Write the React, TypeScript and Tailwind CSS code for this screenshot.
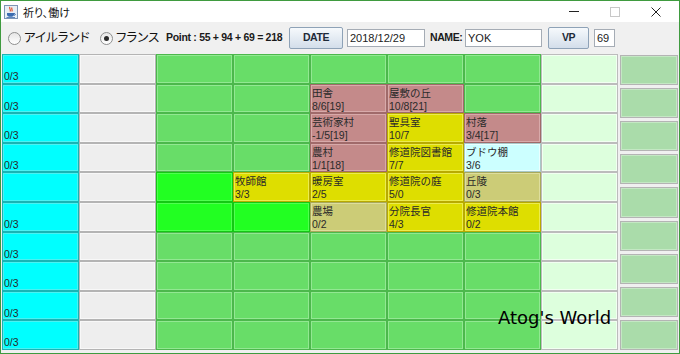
import React from "react";

type Kind = "c" | "g" | "G" | "B" | "Y" | "P" | "K" | "L" | "W";

type Cell = { k: Kind; name?: string; value?: string };

const kindClass: Record<Kind, string> = {
  c: "bg-[#00ffff] border-[#19b4b4] shadow-[inset_0_0_0_1px_#4af2f2]",
  g: "bg-[#eeeeee] border-[#b4b4b4] shadow-[inset_0_0_0_1px_#f8f8f8]",
  G: "bg-[#68dd68] border-[#4cb84c] shadow-[inset_0_0_0_1px_#92e892]",
  B: "bg-[#22ff22] border-[#14c814] shadow-[inset_0_0_0_1px_#50ff50]",
  Y: "bg-[#dede00] border-[#b8aa00] shadow-[inset_0_0_0_1px_#ecec50]",
  P: "bg-[#c48a8a] border-[#a06a6a] shadow-[inset_0_0_0_1px_#d8aaaa]",
  K: "bg-[#cccc77] border-[#a8a85a] shadow-[inset_0_0_0_1px_#dede9e]",
  L: "bg-[#ccffff] border-[#a8c8c8] shadow-[inset_0_0_0_1px_#eaffff]",
  W: "bg-[#ddffdd] border-[#bcbcbc] shadow-[inset_0_0_0_1px_#f2fff2]",
};

const plain = (n: number): Cell[] => [
  { k: "c", value: "0/3" },
  { k: "g" },
  ...Array(n).fill({ k: "G" }),
  { k: "W" },
];

const rows: Cell[][] = [
  plain(5),
  [
    { k: "c", value: "0/3" },
    { k: "g" },
    { k: "G" },
    { k: "G" },
    { k: "P", name: "田舎", value: "8/6[19]" },
    { k: "P", name: "屋敷の丘", value: "10/8[21]" },
    { k: "G" },
    { k: "W" },
  ],
  [
    { k: "c", value: "0/3" },
    { k: "g" },
    { k: "G" },
    { k: "G" },
    { k: "P", name: "芸術家村", value: "-1/5[19]" },
    { k: "Y", name: "聖具室", value: "10/7" },
    { k: "P", name: "村落", value: "3/4[17]" },
    { k: "W" },
  ],
  [
    { k: "c", value: "0/3" },
    { k: "g" },
    { k: "G" },
    { k: "G" },
    { k: "P", name: "農村", value: "1/1[18]" },
    { k: "Y", name: "修道院図書館", value: "7/7" },
    { k: "L", name: "ブドウ棚", value: "3/6" },
    { k: "W" },
  ],
  [
    { k: "c" },
    { k: "g" },
    { k: "B" },
    { k: "Y", name: "牧師館", value: "3/3" },
    { k: "Y", name: "暖房室", value: "2/5" },
    { k: "Y", name: "修道院の庭", value: "5/0" },
    { k: "K", name: "丘陵", value: "0/3" },
    { k: "W" },
  ],
  [
    { k: "c", value: "0/3" },
    { k: "g" },
    { k: "B" },
    { k: "B" },
    { k: "K", name: "農場", value: "0/2" },
    { k: "Y", name: "分院長官", value: "4/3" },
    { k: "Y", name: "修道院本館", value: "0/2" },
    { k: "W" },
  ],
  plain(5),
  plain(5),
  plain(5),
  plain(5),
];

function BoardCell({ cell }: { cell: Cell }) {
  return (
    <div
      className={`border pl-[1px] pt-[2px] text-[10.5px] leading-[13px] text-[#2a2a2a] overflow-hidden whitespace-nowrap ${kindClass[cell.k]}`}
    >
      <div className="h-[13px]">{cell.name ?? ""}</div>
      <div className="h-[13px]">{cell.value ?? ""}</div>
    </div>
  );
}

function Radio({ checked, label, width }: { checked?: boolean; label: string; width: string }) {
  return (
    <div className="flex items-center">
      <span className="flex h-[13px] w-[13px] items-center justify-center rounded-full border border-[#8e8f8f] bg-gradient-to-b from-[#e6e6e6] to-[#ffffff]">
        {checked && <span className="h-[5px] w-[5px] rounded-full bg-[#2a2a2a]" />}
      </span>
      <span className={`ml-[3px] ${width} text-[12.5px] leading-[14px] text-[#111] [font-feature-settings:'palt']`}>
        {label}
      </span>
    </div>
  );
}

function Btn({ label, width, ml }: { label: string; width: string; ml: string }) {
  return (
    <div
      className={`${ml} ${width} flex h-[22px] items-center justify-center rounded-[2px] border border-[#8ea2b7] bg-gradient-to-b from-[#f6f9fc] to-[#d3deea] text-[10.5px] font-bold tracking-[-0.4px] text-[#1e2a38]`}
    >
      {label}
    </div>
  );
}

function Field({ value, width, ml }: { value: string; width: string; ml: string }) {
  return (
    <div
      className={`${ml} ${width} flex h-[18px] items-center border border-[#a5acb5] bg-white pl-[2px] text-[11px] text-[#222]`}
    >
      {value}
    </div>
  );
}

function JavaIcon() {
  return (
    <svg width="14" height="14" viewBox="0 0 14 14">
      <rect x="0.5" y="0.5" width="13" height="13" fill="#e8eef5" stroke="#7d95b5" />
      <path d="M6 2 C4.5 3.5 7.5 4.5 6 6.5 M8 2.5 C7 4 9 4.5 7.8 6.5" stroke="#e0451b" strokeWidth="1.1" fill="none" />
      <path d="M3 8 H10 V9.5 C10 11 8.5 11.8 6.5 11.8 C4.5 11.8 3 11 3 9.5 Z" fill="#3b6cb0" />
      <path d="M10 8.5 C11.8 8.5 11.8 10.3 10 10.3" stroke="#3b6cb0" strokeWidth="1" fill="none" />
      <path d="M2.5 12.5 H11" stroke="#3b6cb0" strokeWidth="0.8" />
    </svg>
  );
}

export default function App() {
  return (
    <div className="flex h-[354px] w-[680px] flex-col border border-[#3f9b3f] bg-[#f0f0f0] font-['Liberation_Sans','Noto_Sans_CJK_JP',sans-serif]">
      {/* title bar */}
      <div className="flex h-[21px] items-center bg-white">
        <div className="ml-[3px] mt-[1px]">
          <JavaIcon />
        </div>
        <span className="ml-[5px] text-[11px] leading-[14px] text-[#111] font-['Noto_Sans_CJK_JP',sans-serif] [font-feature-settings:'palt']">
          祈り、働け
        </span>
        <div className="ml-auto flex items-center">
          <div className="flex h-[21px] w-[46px] items-center justify-center">
            <span className="h-[1px] w-[10px] bg-[#222]" />
          </div>
          <div className="flex h-[21px] w-[36px] items-center justify-center">
            <span className="h-[10px] w-[10px] border border-[#c8c8c8]" />
          </div>
          <div className="flex h-[21px] w-[46px] items-center justify-center">
            <svg width="10" height="10" viewBox="0 0 10 10">
              <path d="M0.5 0.5 L9.5 9.5 M9.5 0.5 L0.5 9.5" stroke="#222" strokeWidth="1" />
            </svg>
          </div>
        </div>
      </div>

      {/* toolbar */}
      <div className="flex h-[32px] items-center pl-[7px]">
        <Radio label="アイルランド" width="w-[69px]" />
        <div className="ml-[7px]">
          <Radio checked label="フランス" width="w-[47px]" />
        </div>
        <span className="ml-[3px] w-[120px] whitespace-nowrap text-[10.5px] font-bold tracking-[-0.3px] text-[#1a1a1a]">
          Point : 55 + 94 + 69 = 218
        </span>
        <Btn label="DATE" width="w-[54px]" ml="ml-[3px]" />
        <Field value="2018/12/29" width="w-[78px]" ml="ml-[4px]" />
        <span className="ml-[5px] w-[32px] text-[10.5px] font-bold tracking-[-0.4px] text-[#1a1a1a]">
          NAME:
        </span>
        <Field value="YOK" width="w-[77px]" ml="ml-[3px]" />
        <Btn label="VP" width="w-[41px]" ml="ml-[6px]" />
        <Field value="69" width="w-[21px]" ml="ml-[5px]" />
      </div>

      {/* board */}
      <div className="relative flex gap-[2px] pl-[1px]">
        <div className="grid h-[296px] w-[616px] grid-cols-[repeat(8,77px)] grid-rows-[repeat(10,minmax(0,1fr))]">
          {rows.map((row, r) =>
            row.map((cell, c) => <BoardCell key={`${r}-${c}`} cell={cell} />)
          )}
        </div>
        <div className="flex h-[296px] w-[58px] flex-col gap-[3px] pt-[1px]">
          {Array.from({ length: 9 }).map((_, i) => (
            <div
              key={i}
              className="flex-1 border border-[#b4b4b4] bg-[#aadcaa] shadow-[inset_0_0_0_1px_#c4e8c4]"
            />
          ))}
        </div>
        <span className="absolute left-[497px] top-[254px] text-[18px] leading-[20px] text-black font-['DejaVu_Sans',sans-serif]">
          Atog's World
        </span>
      </div>
    </div>
  );
}
